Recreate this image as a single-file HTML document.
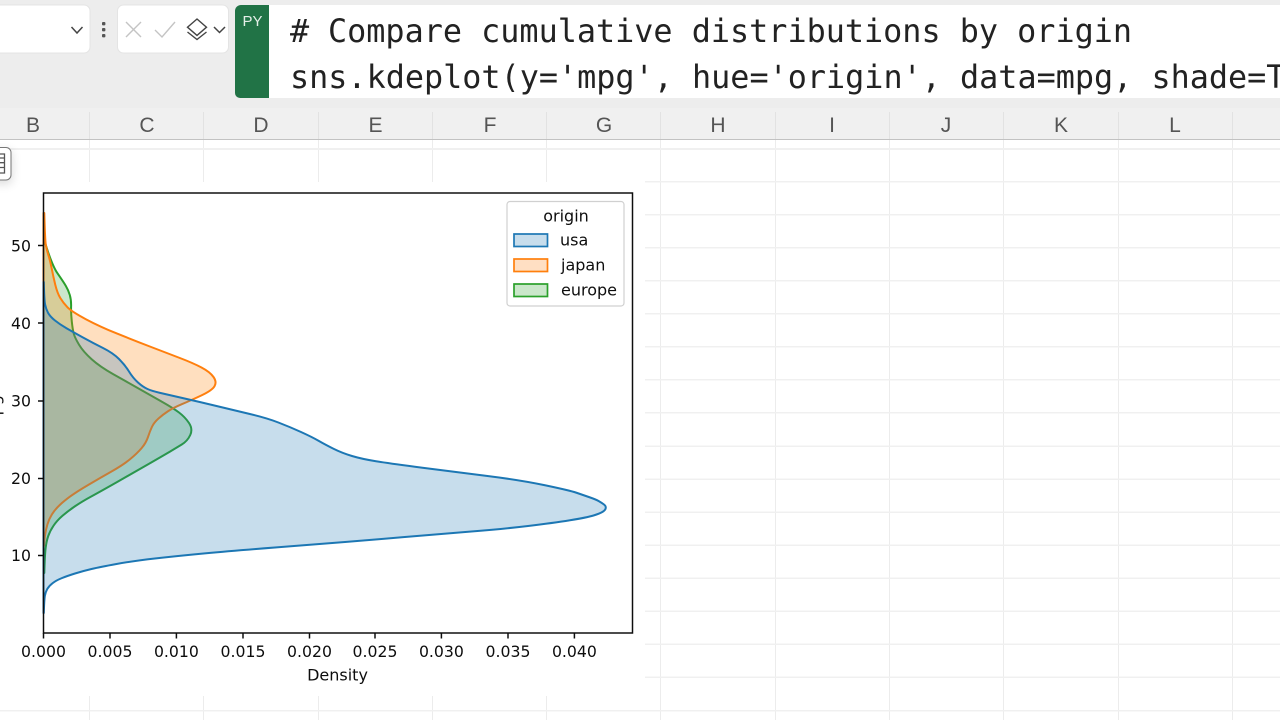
<!DOCTYPE html>
<html>
<head>
<meta charset="utf-8">
<style>
html,body{margin:0;padding:0;width:1280px;height:720px;overflow:hidden;background:#fff}
svg{display:block;position:absolute;left:0;top:0}
.m{font-family:"DejaVu Sans",sans-serif;fill:#111;font-size:16px}
.t{font-size:15.7px}
.h{font-family:"Liberation Sans",sans-serif;font-size:21px;fill:#555;text-anchor:middle}
.c{font-family:"DejaVu Sans Mono","Liberation Mono",monospace;font-size:31.8px;fill:#222}
</style>
</head>
<body>
<svg width="1280" height="720" viewBox="0 0 1280 720">
<defs>
<filter id="soft" x="-5%" y="-5%" width="110%" height="110%"><feGaussianBlur stdDeviation="0.28"/></filter>
<filter id="sh" x="-100%" y="-50%" width="300%" height="200%"><feGaussianBlur stdDeviation="5"/></filter>
<clipPath id="fc"><rect x="269" y="5" width="1011" height="93"/></clipPath>
</defs>

<!-- toolbar -->
<rect width="1280" height="108" fill="#ededed"/>
<rect x="-10" y="5" width="100" height="48" rx="6" fill="#fff" stroke="#e4e4e4"/>
<path d="M71.5 27l5.5 6 5.5-6" fill="none" stroke="#444" stroke-width="1.5"/>
<rect x="102" y="22" width="3.4" height="3.4" rx="1" fill="#555"/>
<rect x="102" y="28" width="3.4" height="3.4" rx="1" fill="#555"/>
<rect x="102" y="34" width="3.4" height="3.4" rx="1" fill="#555"/>
<rect x="117.5" y="5" width="111" height="48" rx="6" fill="#fff" stroke="#e4e4e4"/>
<path d="M126 22l15 15M141 22l-15 15" fill="none" stroke="#c4c4c4" stroke-width="1.4"/>
<path d="M155 30l7 7 13-15" fill="none" stroke="#c4c4c4" stroke-width="1.4"/>
<path d="M197 19l9.5 8.2-9.5 8.2-9.5-8.2z" fill="none" stroke="#444" stroke-width="1.4"/>
<path d="M187.5 32l9.5 7.5 9.5-7.5" fill="none" stroke="#444" stroke-width="1.4"/>
<path d="M214 27l5.5 5.5 5.5-5.5" fill="none" stroke="#444" stroke-width="1.5"/>

<!-- formula bar -->
<rect x="269" y="5" width="1011" height="93" fill="#fff"/>
<path d="M241 5h28v93h-29a5 5 0 0 1-5-5V11a6 6 0 0 1 6-6z" fill="#217346"/>
<text x="252.5" y="26" text-anchor="middle" font-family="'Liberation Sans',sans-serif" font-size="15" fill="#e4efe8">PY</text>
<g clip-path="url(#fc)">
<text class="c" x="290" y="42">#</text>
<text class="c" x="328" y="42">Compare cumulative distributions by origin</text>
<text class="c" x="290" y="88">sns.kdeplot(y='mpg', hue='origin', data=mpg, shade=T</text>
</g>

<!-- column header -->
<rect y="108" width="1280" height="31" fill="#f0f0f0"/>
<rect y="139" width="1280" height="1" fill="#c2c2c2"/>
<g fill="#e2e2e2">
<rect x="89" y="112" width="1" height="27"/><rect x="203" y="112" width="1" height="27"/><rect x="318" y="112" width="1" height="27"/><rect x="432" y="112" width="1" height="27"/><rect x="546" y="112" width="1" height="27"/><rect x="660" y="112" width="1" height="27"/><rect x="775" y="112" width="1" height="27"/><rect x="889" y="112" width="1" height="27"/><rect x="1003" y="112" width="1" height="27"/><rect x="1118" y="112" width="1" height="27"/><rect x="1232" y="112" width="1" height="27"/>
</g>
<g class="hh">
<text class="h" x="33" y="132">B</text><text class="h" x="147" y="132">C</text><text class="h" x="261" y="132">D</text><text class="h" x="375.5" y="132">E</text><text class="h" x="490" y="132">F</text><text class="h" x="604" y="132">G</text><text class="h" x="718" y="132">H</text><text class="h" x="832" y="132">I</text><text class="h" x="946" y="132">J</text><text class="h" x="1061" y="132">K</text><text class="h" x="1175" y="132">L</text>
</g>

<!-- grid -->
<g fill="#ececec">
<rect x="89" y="140" width="1" height="42"/><rect x="203" y="140" width="1" height="42"/><rect x="318" y="140" width="1" height="42"/><rect x="432" y="140" width="1" height="42"/><rect x="546" y="140" width="1" height="42"/>
<rect x="89" y="696" width="1" height="24"/><rect x="203" y="696" width="1" height="24"/><rect x="318" y="696" width="1" height="24"/><rect x="432" y="696" width="1" height="24"/><rect x="546" y="696" width="1" height="24"/>
<rect x="660" y="140" width="1" height="580"/><rect x="775" y="140" width="1" height="580"/><rect x="889" y="140" width="1" height="580"/><rect x="1003" y="140" width="1" height="580"/><rect x="1118" y="140" width="1" height="580"/><rect x="1232" y="140" width="1" height="580"/>
</g>
<g fill="#f0f0f0">
<rect y="148" width="1280" height="2"/>
<rect x="645" y="181" width="635" height="1.5"/><rect x="645" y="214" width="635" height="1.5"/><rect x="645" y="247" width="635" height="1.5"/><rect x="645" y="280" width="635" height="1.5"/><rect x="645" y="313" width="635" height="1.5"/><rect x="645" y="346" width="635" height="1.5"/><rect x="645" y="379" width="635" height="1.5"/><rect x="645" y="412" width="635" height="1.5"/><rect x="645" y="445.5" width="635" height="1.5"/><rect x="645" y="478.5" width="635" height="1.5"/><rect x="645" y="511.5" width="635" height="1.5"/><rect x="645" y="544.5" width="635" height="1.5"/><rect x="645" y="577.5" width="635" height="1.5"/><rect x="645" y="610.5" width="635" height="1.5"/><rect x="645" y="643.5" width="635" height="1.5"/><rect x="645" y="676.5" width="635" height="1.5"/>
<rect y="710" width="1280" height="1.5"/>
</g>

<!-- floating icon -->
<rect x="-8" y="150" width="20" height="34" rx="5" fill="#000" opacity=".14" filter="url(#sh)"/>
<rect x="-8" y="147.5" width="19" height="32.5" rx="5" fill="#fff" stroke="#777" stroke-width="1"/>
<path d="M-2 154H4.5V173H-2M-2 158H4.5M-2 162.7H4.5M-2 167.5H4.5" fill="none" stroke="#555" stroke-width="1.3"/>

<!-- cut-off y label -->
<g transform="translate(0,413) rotate(-90)" filter="url(#soft)"><text class="m" text-anchor="middle" x="0" y="0">mpg</text></g>

<!-- chart -->
<g filter="url(#soft)">
<!-- europe -->
<path fill="#2ca02c" fill-opacity=".25" stroke="#2ca02c" stroke-width="2" stroke-linejoin="round" d="M44.3,240 Q51.7,265 57.5,273.35 Q63.3,281.7 65.8,285.85 Q68.3,290 69.8,295 Q71.3,300 71.1,306.5 Q70.9,313 71.8,321.5 Q72.7,330 73.85,334 Q75,338 79.15,344.85 Q83.3,351.7 91.65,359.2 Q100,366.7 113.35,374.2 Q126.7,381.7 138.35,388.35 Q150,395 161.5,401.5 Q173,408 179,412.5 Q185,417 189,423 Q193,429 190.25,435 Q187.5,441 181.75,444.5 Q176,448 171,451 Q166,454 149.5,463.5 Q133,473 116.5,482.35 Q100,491.7 91,496.6 Q82,501.5 75,506.25 Q68,511 62.5,515.75 Q57,520.5 53.5,525.75 Q50,531 48.25,536 Q46.5,541 45.65,548 Q44.8,555 44.3,573 L43.5,573 L43.5,240 Z"/>
<!-- japan -->
<path fill="#ff7f0e" fill-opacity=".25" stroke="#ff7f0e" stroke-width="2" stroke-linejoin="round" d="M44.3,213 Q45,240 45.85,245 Q46.7,250 48.35,255 Q50,260 51.65,268.35 Q53.3,276.7 55.3,284.85 Q57.3,293 60.3,298 Q63.3,303 67.5,307.35 Q71.7,311.7 85.85,319.2 Q100,326.7 116.5,333.35 Q133,340 149.85,346.5 Q166.7,353 179.85,358 Q193,363 201.5,367.5 Q210,372 213.5,377 Q217,382 214.5,386.25 Q212,390.5 201,395.6 Q190,400.7 181.5,404.35 Q173,408 168,411.25 Q163,414.5 158.5,418.5 Q154,422.5 152,426.75 Q150,431 148,437 Q146,443 141.5,448.25 Q137,453.5 130,459.25 Q123,465 111.5,471.5 Q100,478 88.35,484.85 Q76.7,491.7 70.35,496.35 Q64,501 59.5,505.25 Q55,509.5 52,514.25 Q49,519 47.4,524.5 Q45.8,530 45.05,535 Q44.3,540 44,546 L43.5,546 L43.5,213 Z"/>
<!-- usa -->
<path fill="#1f77b4" fill-opacity=".25" stroke="#1f77b4" stroke-width="2" stroke-linejoin="round" d="M43.8,613 Q44.2,600 44.85,596 Q45.5,592 47.25,589 Q49,586 52.5,583.25 Q56,580.5 61.5,578.25 Q67,576 75,573.5 Q83,571 91.5,569 Q100,567 116.5,564 Q133,561 154.85,558.5 Q176.7,556 204.85,553.35 Q233,550.7 276.5,547.35 Q320,544 345,542 Q370,540 403.35,537.15 Q436.7,534.3 469.85,531.65 Q503,529 528,526 Q553,523 570,520.25 Q587,517.5 593.5,515.5 Q600,513.5 602.75,511.75 Q605.5,510 605.75,508 Q606,506 604,504.5 Q602,503 599,501.25 Q596,499.5 589.5,497.25 Q583,495 576.5,492.75 Q570,490.5 545,485.25 Q520,480 486.5,475.85 Q453,471.7 421.5,467.6 Q390,463.5 376,461.25 Q362,459 352,456 Q342,453 333.5,448.75 Q325,444.5 318.5,440.75 Q312,437 301,432 Q290,427 278.35,422.5 Q266.7,418 249.85,414 Q233,410 216.5,406 Q200,402 183.5,398.25 Q167,394.5 159.5,392.75 Q152,391 147.5,389 Q143,387 138,382.5 Q133,378 129,371.5 Q125,365 119,359 Q113,353 103,348 Q93,343 83,337.5 Q73,332 66.5,328.25 Q60,324.5 55,320.5 Q50,316.5 48,312.75 Q46,309 45.1,304.5 Q44.2,300 43.8,282 L43.5,282 L43.5,613 Z"/>

<!-- axes -->
<rect x="43.5" y="193" width="589" height="440" fill="none" stroke="#111" stroke-width="1.5"/>
<path d="M38 245.5h5.5M38 323h5.5M38 401h5.5M38 478.5h5.5M38 555.5h5.5M43.5 633v5.5M110 633v5.5M176.4 633v5.5M243 633v5.5M309.5 633v5.5M375 633v5.5M441.4 633v5.5M508 633v5.5M574.4 633v5.5" fill="none" stroke="#111" stroke-width="1.5"/>
<g>
<text class="m t" x="31" y="251.5" text-anchor="end">50</text>
<text class="m t" x="31" y="329" text-anchor="end">40</text>
<text class="m t" x="31" y="406.5" text-anchor="end">30</text>
<text class="m t" x="31" y="484" text-anchor="end">20</text>
<text class="m t" x="31" y="561" text-anchor="end">10</text>
<text class="m t" x="43.5" y="657" text-anchor="middle">0.000</text>
<text class="m t" x="110" y="657" text-anchor="middle">0.005</text>
<text class="m t" x="176.4" y="657" text-anchor="middle">0.010</text>
<text class="m t" x="243" y="657" text-anchor="middle">0.015</text>
<text class="m t" x="309.5" y="657" text-anchor="middle">0.020</text>
<text class="m t" x="375" y="657" text-anchor="middle">0.025</text>
<text class="m t" x="441.4" y="657" text-anchor="middle">0.030</text>
<text class="m t" x="508" y="657" text-anchor="middle">0.035</text>
<text class="m t" x="574.4" y="657" text-anchor="middle">0.040</text>
<text class="m" x="337.5" y="680.5" text-anchor="middle">Density</text>
</g>

<!-- legend -->
<rect x="507" y="201.5" width="117" height="104.5" rx="3" fill="#fff" fill-opacity=".85" stroke="#d0d0d0" stroke-width="1.2"/>
<text class="m" x="566" y="221.5" text-anchor="middle">origin</text>
<rect x="514" y="234" width="33.5" height="12.5" fill="#c7ddec" stroke="#1f77b4" stroke-width="1.7"/>
<rect x="514" y="259" width="33.5" height="12.5" fill="#ffdfc3" stroke="#ff7f0e" stroke-width="1.7"/>
<rect x="514" y="284" width="33.5" height="12.5" fill="#cae7ca" stroke="#2ca02c" stroke-width="1.7"/>
<text class="m" x="560" y="245.5">usa</text>
<text class="m" x="561" y="270.5">japan</text>
<text class="m" x="561" y="295.5">europe</text>
</g>
</svg>
</body>
</html>
